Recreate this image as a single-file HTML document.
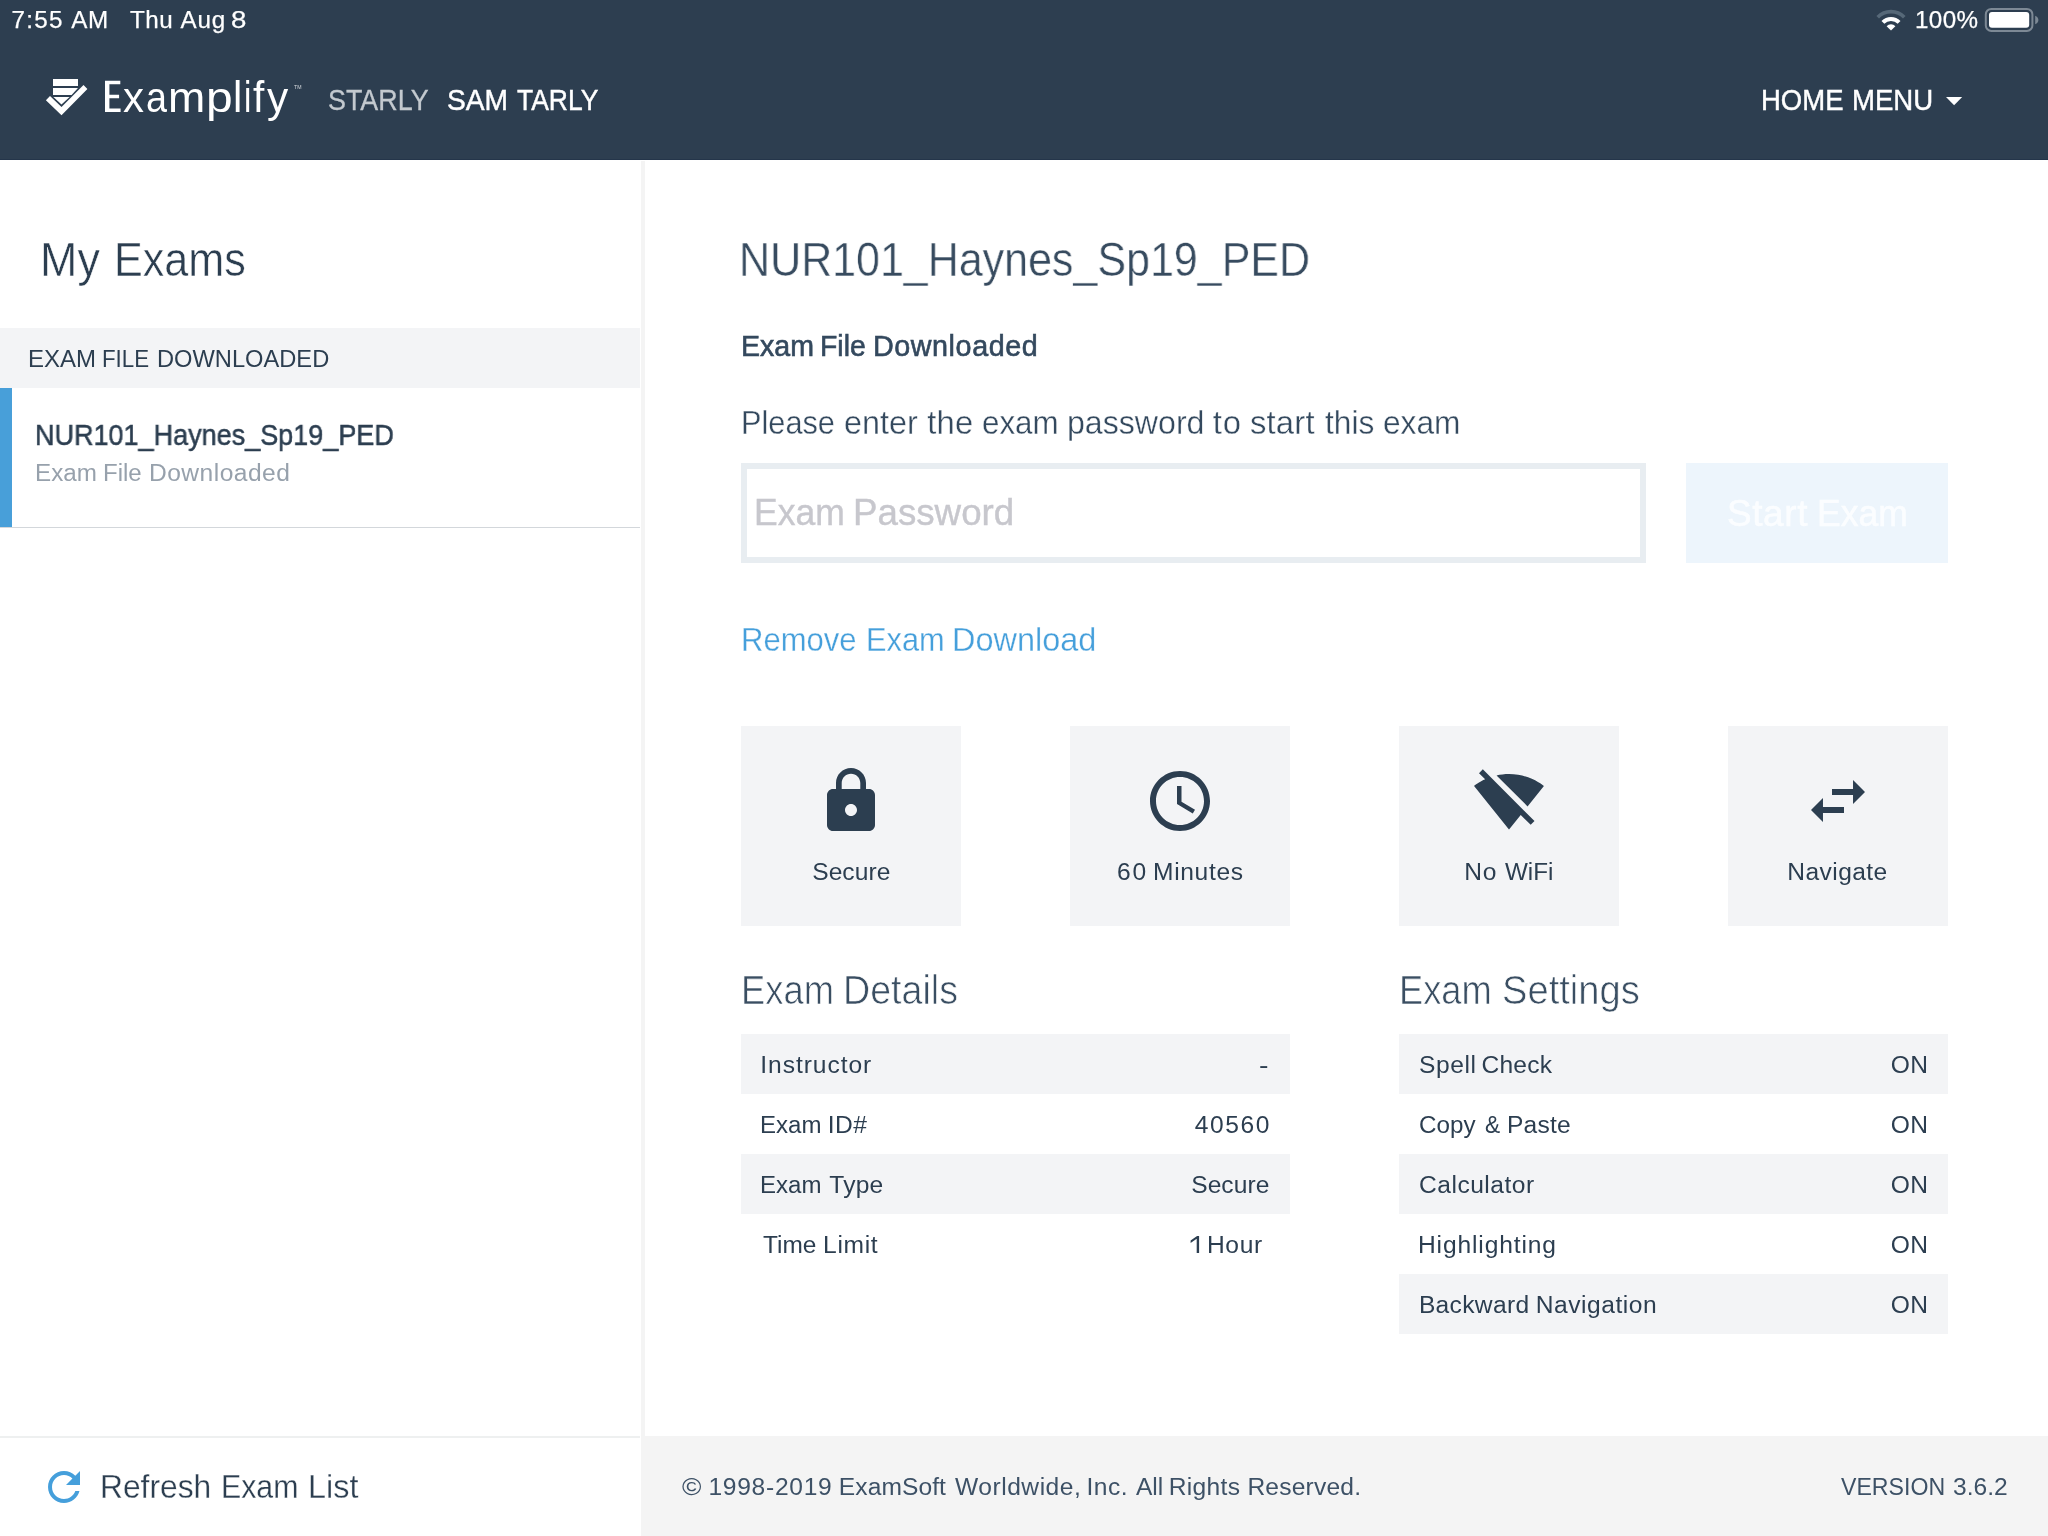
<!DOCTYPE html>
<html><head><meta charset="utf-8"><title>Examplify</title>
<style>
html,body{margin:0;padding:0;}
body{width:2048px;height:1536px;position:relative;overflow:hidden;background:#fff;font-family:"Liberation Sans", sans-serif;}
#app{position:absolute;left:0;top:0;width:2048px;height:1536px;overflow:hidden;will-change:transform;}
.a{position:absolute;display:block;}
.t{position:absolute;white-space:pre;transform-origin:0 0;font-family:"Liberation Sans", sans-serif;}
</style></head>
<body>
<div id="app">
<div class="a" style="left:0px;top:0px;width:2048px;height:160px;background:#2d3e50;"></div>
<div class="a" style="left:0px;top:159px;width:2048px;height:1px;background:#24354a;"></div>
<div class="a" style="left:641px;top:161px;width:4px;height:1275px;background:#f4f4f4;"></div>
<div class="a" style="left:641px;top:1436px;width:1407px;height:100px;background:#f4f4f4;"></div>
<div class="a" style="left:0px;top:1436px;width:640px;height:2px;background:#eef0f0;"></div>
<div class="a" style="left:0px;top:328px;width:640px;height:60px;background:#f3f4f6;"></div>
<div class="a" style="left:0px;top:388px;width:12px;height:139px;background:#489fd9;"></div>
<div class="a" style="left:0px;top:527px;width:640px;height:1px;background:#d3d7db;"></div>
<div class="a" style="left:741px;top:463px;width:905px;height:100px;background:#fff;box-sizing:border-box;border:6px solid #e8edf1;"></div>
<div class="a" style="left:1686px;top:463px;width:262px;height:100px;background:#edf5fc;"></div>
<div class="a" style="left:741px;top:726px;width:220px;height:200px;background:#f3f4f6;"></div>
<div class="a" style="left:1070px;top:726px;width:220px;height:200px;background:#f3f4f6;"></div>
<div class="a" style="left:1399px;top:726px;width:220px;height:200px;background:#f3f4f6;"></div>
<div class="a" style="left:1728px;top:726px;width:220px;height:200px;background:#f3f4f6;"></div>
<div class="a" style="left:741px;top:1034px;width:549px;height:60px;background:#f3f4f6;"></div>
<div class="a" style="left:741px;top:1154px;width:549px;height:60px;background:#f3f4f6;"></div>
<div class="a" style="left:1399px;top:1034px;width:549px;height:60px;background:#f3f4f6;"></div>
<div class="a" style="left:1399px;top:1154px;width:549px;height:60px;background:#f3f4f6;"></div>
<div class="a" style="left:1399px;top:1274px;width:549px;height:60px;background:#f3f4f6;"></div>

<svg class="a" style="left:0;top:0" width="2048" height="160" viewBox="0 0 2048 160">
  <!-- logo -->
  <g fill="#fff">
    <rect x="53" y="79" width="25" height="7"/>
    <polygon points="53,88 78,88 71.6,95 53,95"/>
    <polygon points="53.4,97 69.6,97 61.5,104.6"/>
    <polygon points="50,96 45.9,100.25 61.5,115.3 87.4,89 83.5,84.9 61.5,106.9"/>
  </g>
  <!-- E of logotype -->
  <path fill="#fff" d="M105,80.75 H120.3 V84.2 H109.4 V94.8 H119.1 V98.25 H109.4 V108.6 H120.6 V112 H105 Z"/>
  <!-- caret -->
  <polygon fill="#fff" points="1946,97 1962.2,97 1954.1,105.3"/>
  <!-- wifi -->
  <g fill="none" stroke-linecap="butt">
    <path d="M1877.7,17.2 A18.8,18.8 0 0 1 1904.3,17.2" stroke="#566878" stroke-width="3.7"/>
    <path d="M1882.9,22.4 A11.5,11.5 0 0 1 1899.1,22.4" stroke="#fff" stroke-width="4"/>
  </g>
  <path fill="#fff" d="M1891,30.6 L1886.6,26.2 A6.2,6.2 0 0 1 1895.4,26.2 Z"/>
  <!-- battery -->
  <rect x="1985.8" y="8.9" width="46.6" height="22" rx="5.5" ry="5.5" fill="none" stroke="#7d8995" stroke-width="2"/>
  <rect x="1989" y="12" width="40.2" height="15.8" rx="3" ry="3" fill="#fff"/>
  <path fill="#7d8995" d="M2035.2,15.8 C2037.2,16.6 2038.4,18.2 2038.4,20 C2038.4,21.8 2037.2,23.4 2035.2,24.2 Z"/>
</svg>

<svg class="a" style="left:1188px;top:1232px" width="14" height="24" viewBox="1188 1232 14 24"><path fill="#2c3e50" d="M1199.1,1253 V1236 H1197.1 L1190.6,1240.5 V1243 L1196.7,1238.8 V1253 Z"/></svg>
<svg class="a" style="left:815px;top:765px" width="72" height="72" viewBox="0 0 24 24"><path fill="#2c3e50" d="M18 8h-1V6c0-2.76-2.24-5-5-5S7 3.24 7 6v2H6c-1.1 0-2 .9-2 2v10c0 1.1.9 2 2 2h12c1.1 0 2-.9 2-2V10c0-1.1-.9-2-2-2zm-6 9c-1.1 0-2-.9-2-2s.9-2 2-2 2 .9 2 2-.9 2-2 2zm3.1-9H8.9V6c0-1.71 1.39-3.1 3.1-3.1 1.71 0 3.1 1.39 3.1 3.1v2z"/></svg>
<svg class="a" style="left:1144px;top:765px" width="72" height="72" viewBox="0 0 24 24"><path fill="#2c3e50" d="M11.99 2C6.47 2 2 6.48 2 12s4.47 10 9.99 10C17.52 22 22 17.52 22 12S17.52 2 11.99 2zM12 20c-4.42 0-8-3.58-8-8s3.58-8 8-8 8 3.58 8 8-3.58 8-8 8zm.5-13H11v6l5.25 3.15.75-1.23-4.5-2.67z"/></svg>
<svg class="a" style="left:1473px;top:765px" width="72" height="72" viewBox="0 0 24 24"><path fill="#2c3e50" d="M23.64 7c-.45-.34-4.93-4-11.64-4-1.5 0-2.89.19-4.15.48L18.18 13.8 23.64 7zm-6.6 8.22L3.27 1.44 2 2.72l2.05 2.06C1.91 5.76.59 6.82.36 7l11.63 14.49.01.01.01-.01 3.9-4.86 3.32 3.32 1.27-1.27-3.46-3.46z"/></svg>
<svg class="a" style="left:1802px;top:765px" width="72" height="72" viewBox="0 0 24 24"><path fill="#2c3e50" d="M6.99 11L3 15l3.99 4v-3H14v-2H6.99v-3zM21 9l-3.99-4v3H10v2h7.01v3L21 9z"/></svg>
<svg class="a" style="left:40px;top:1463px" width="48" height="48" viewBox="0 0 24 24"><path fill="#459fdb" d="M17.65 6.35C16.2 4.9 14.21 4 12 4c-4.42 0-7.99 3.58-7.99 8s3.57 8 7.99 8c3.73 0 6.84-2.55 7.73-6h-2.08c-.82 2.33-3.04 4-5.65 4-3.31 0-6-2.69-6-6s2.69-6 6-6c1.66 0 3.14.69 4.22 1.78L13 11h7V4l-2.35 2.35z"/></svg>
<div class="t" style="top:5px;font-size:24.2px;line-height:30px;color:#fff;left:11.50px;letter-spacing:1.259px;-webkit-text-stroke:0.25px #fff;">7:55</div>
<div class="t" style="top:5px;font-size:24.2px;line-height:30px;color:#fff;left:71.30px;letter-spacing:0.467px;-webkit-text-stroke:0.25px #fff;">AM</div>
<div class="t" style="top:5px;font-size:24.2px;line-height:30px;color:#fff;left:130.00px;letter-spacing:0.537px;-webkit-text-stroke:0.25px #fff;">Thu</div>
<div class="t" style="top:5px;font-size:24.2px;line-height:30px;color:#fff;left:180.60px;letter-spacing:0.808px;-webkit-text-stroke:0.25px #fff;">Aug</div>
<div class="t" style="top:5px;font-size:24.2px;line-height:30px;color:#fff;left:231.36px;transform:scaleX(1.1417);-webkit-text-stroke:0.25px #fff;">8</div>
<div class="t" style="top:5px;font-size:24.2px;line-height:30px;color:#fff;left:1915.00px;letter-spacing:0.415px;-webkit-text-stroke:0.25px #fff;">100%</div>
<div class="t" style="top:71px;font-size:42.6px;line-height:52px;color:#fff;left:123.40px;transform:scaleX(0.9857);">x</div>
<div class="t" style="top:71px;font-size:42.6px;line-height:52px;color:#fff;left:145.51px;transform:scaleX(0.8870);">a</div>
<div class="t" style="top:71px;font-size:42.6px;line-height:52px;color:#fff;left:168.30px;transform:scaleX(1.0484);">m</div>
<div class="t" style="top:71px;font-size:42.6px;line-height:52px;color:#fff;left:206.25px;transform:scaleX(1.1250);">p</div>
<div class="t" style="top:71px;font-size:42.6px;line-height:52px;color:#fff;left:266.60px;transform:scaleX(0.9955);">y</div>
<div class="t" style="top:70px;font-size:44.6px;line-height:54px;color:#fff;left:233.19px;transform:scaleX(0.9375);">l</div>
<div class="t" style="top:70px;font-size:44.6px;line-height:54px;color:#fff;left:243.92px;transform:scaleX(0.7400);">i</div>
<div class="t" style="top:70px;font-size:44.6px;line-height:54px;color:#fff;left:252.90px;transform:scaleX(0.9115);">f</div>
<div class="t" style="top:84px;font-size:5.6px;line-height:7px;color:#d5d9dd;left:294.40px;transform:scaleX(0.9267);">TM</div>
<div class="t" style="top:82px;font-size:29.5px;line-height:36px;color:#c3c9cf;left:328.49px;transform:scaleX(0.9115);-webkit-text-stroke:0.3px #c3c9cf;">STARLY</div>
<div class="t" style="top:82px;font-size:29.5px;line-height:36px;color:#fff;left:447.14px;transform:scaleX(0.9551);-webkit-text-stroke:0.45px #fff;">SAM</div>
<div class="t" style="top:82px;font-size:29.5px;line-height:36px;color:#fff;left:517.20px;transform:scaleX(0.8975);-webkit-text-stroke:0.45px #fff;">TARLY</div>
<div class="t" style="top:82px;font-size:29.5px;line-height:36px;color:#fff;left:1760.94px;transform:scaleX(0.9321);-webkit-text-stroke:0.45px #fff;">HOME</div>
<div class="t" style="top:82px;font-size:29.5px;line-height:36px;color:#fff;left:1852.13px;transform:scaleX(0.9347);-webkit-text-stroke:0.45px #fff;">MENU</div>
<div class="t" style="top:230px;font-size:48.4px;line-height:59px;color:#2c3e50;left:40.02px;transform:scaleX(0.9276);-webkit-text-stroke:0.5px #fff;">My</div>
<div class="t" style="top:230px;font-size:48.4px;line-height:59px;color:#2c3e50;left:113.53px;transform:scaleX(0.8915);-webkit-text-stroke:0.5px #fff;">Exams</div>
<div class="t" style="top:344px;font-size:24.59px;line-height:30px;color:#2c3e50;left:27.55px;transform:scaleX(0.9761);">EXAM</div>
<div class="t" style="top:344px;font-size:24.59px;line-height:30px;color:#2c3e50;left:102.09px;transform:scaleX(0.9069);">FILE</div>
<div class="t" style="top:344px;font-size:24.59px;line-height:30px;color:#2c3e50;left:156.67px;transform:scaleX(0.9629);">DOWNLOADED</div>
<div class="t" style="top:418px;font-size:28.69px;line-height:35px;color:#2c3e50;left:35.32px;transform:scaleX(0.9413);-webkit-text-stroke:0.5px #2c3e50;">NUR101_Haynes_Sp19_PED</div>
<div class="t" style="top:458px;font-size:24.59px;line-height:30px;color:#97a1ac;left:35.23px;transform:scaleX(0.9840);">Exam</div>
<div class="t" style="top:458px;font-size:24.59px;line-height:30px;color:#97a1ac;left:103.05px;transform:scaleX(0.9774);">File</div>
<div class="t" style="top:458px;font-size:24.59px;line-height:30px;color:#97a1ac;left:149.00px;letter-spacing:0.469px;">Downloaded</div>
<div class="t" style="top:1467px;font-size:32.79px;line-height:40px;color:#2c3e50;left:100.36px;transform:scaleX(0.9691);-webkit-text-stroke:0.3px #fff;">Refresh</div>
<div class="t" style="top:1467px;font-size:32.79px;line-height:40px;color:#2c3e50;left:220.85px;transform:scaleX(0.9244);-webkit-text-stroke:0.3px #fff;">Exam</div>
<div class="t" style="top:1467px;font-size:32.79px;line-height:40px;color:#2c3e50;left:307.72px;transform:scaleX(0.9876);-webkit-text-stroke:0.3px #fff;">List</div>
<div class="t" style="top:230px;font-size:48.4px;line-height:59px;color:#374b5f;left:739.34px;transform:scaleX(0.8882);-webkit-text-stroke:0.5px #fff;">NUR101_Haynes_Sp19_PED</div>
<div class="t" style="top:329px;font-size:28.69px;line-height:35px;color:#34495e;left:740.71px;transform:scaleX(0.9952);-webkit-text-stroke:0.6px #34495e;">Exam</div>
<div class="t" style="top:329px;font-size:28.69px;line-height:35px;color:#34495e;left:819.82px;transform:scaleX(0.9891);-webkit-text-stroke:0.6px #34495e;">File</div>
<div class="t" style="top:329px;font-size:28.69px;line-height:35px;color:#34495e;left:872.90px;letter-spacing:0.596px;-webkit-text-stroke:0.6px #34495e;">Downloaded</div>
<div class="t" style="top:403px;font-size:32.79px;line-height:40px;color:#34495e;left:741.13px;transform:scaleX(0.9371);-webkit-text-stroke:0.35px #fff;">Please</div>
<div class="t" style="top:403px;font-size:32.79px;line-height:40px;color:#34495e;left:844.11px;transform:scaleX(0.9864);-webkit-text-stroke:0.35px #fff;">enter</div>
<div class="t" style="top:403px;font-size:32.79px;line-height:40px;color:#34495e;left:927.30px;letter-spacing:0.130px;-webkit-text-stroke:0.35px #fff;">the</div>
<div class="t" style="top:403px;font-size:32.79px;line-height:40px;color:#34495e;left:981.64px;transform:scaleX(0.9556);-webkit-text-stroke:0.35px #fff;">exam</div>
<div class="t" style="top:403px;font-size:32.79px;line-height:40px;color:#34495e;left:1066.54px;transform:scaleX(0.9798);-webkit-text-stroke:0.35px #fff;">password</div>
<div class="t" style="top:403px;font-size:32.79px;line-height:40px;color:#34495e;left:1212.80px;letter-spacing:0.892px;-webkit-text-stroke:0.35px #fff;">to</div>
<div class="t" style="top:403px;font-size:32.79px;line-height:40px;color:#34495e;left:1250.00px;letter-spacing:0.188px;-webkit-text-stroke:0.35px #fff;">start</div>
<div class="t" style="top:403px;font-size:32.79px;line-height:40px;color:#34495e;left:1324.50px;transform:scaleX(0.9660);-webkit-text-stroke:0.35px #fff;">this</div>
<div class="t" style="top:403px;font-size:32.79px;line-height:40px;color:#34495e;left:1383.03px;transform:scaleX(0.9659);-webkit-text-stroke:0.35px #fff;">exam</div>
<div class="t" style="top:490px;font-size:36.89px;line-height:45px;color:#c7c7cd;left:754.41px;transform:scaleX(0.9627);-webkit-text-stroke:0.4px #c7c7cd;">Exam</div>
<div class="t" style="top:490px;font-size:36.89px;line-height:45px;color:#c7c7cd;left:853.31px;transform:scaleX(0.9956);-webkit-text-stroke:0.4px #c7c7cd;">Password</div>
<div class="t" style="top:491px;font-size:36.89px;line-height:45px;color:#fbfdff;left:1726.90px;letter-spacing:0.668px;-webkit-text-stroke:0.5px #fbfdff;">Start</div>
<div class="t" style="top:491px;font-size:36.89px;line-height:45px;color:#fbfdff;left:1816.91px;transform:scaleX(0.9627);-webkit-text-stroke:0.5px #fbfdff;">Exam</div>
<div class="t" style="top:620px;font-size:32.79px;line-height:40px;color:#459fdb;left:741.11px;transform:scaleX(0.9467);-webkit-text-stroke:0.3px #fff;">Remove</div>
<div class="t" style="top:620px;font-size:32.79px;line-height:40px;color:#459fdb;left:865.62px;transform:scaleX(0.9380);-webkit-text-stroke:0.3px #fff;">Exam</div>
<div class="t" style="top:620px;font-size:32.79px;line-height:40px;color:#459fdb;left:952.32px;transform:scaleX(0.9905);-webkit-text-stroke:0.3px #fff;">Download</div>
<div class="t" style="top:857px;font-size:24.59px;line-height:30px;color:#2c3e50;left:812.20px;letter-spacing:0.059px;">Secure</div>
<div class="t" style="top:857px;font-size:24.59px;line-height:30px;color:#2c3e50;left:1117.00px;letter-spacing:1.931px;">60</div>
<div class="t" style="top:857px;font-size:24.59px;line-height:30px;color:#2c3e50;left:1153.00px;letter-spacing:0.672px;">Minutes</div>
<div class="t" style="top:857px;font-size:24.59px;line-height:30px;color:#2c3e50;left:1464.20px;letter-spacing:0.750px;">No</div>
<div class="t" style="top:857px;font-size:24.59px;line-height:30px;color:#2c3e50;left:1505.00px;transform:scaleX(0.9859);">WiFi</div>
<div class="t" style="top:857px;font-size:24.59px;line-height:30px;color:#2c3e50;left:1787.30px;letter-spacing:0.424px;">Navigate</div>
<div class="t" style="top:965px;font-size:40.99px;line-height:50px;color:#3a4e62;left:740.54px;transform:scaleX(0.8874);-webkit-text-stroke:0.7px #fff;">Exam</div>
<div class="t" style="top:965px;font-size:40.99px;line-height:50px;color:#3a4e62;left:842.65px;transform:scaleX(0.9180);-webkit-text-stroke:0.7px #fff;">Details</div>
<div class="t" style="top:965px;font-size:40.99px;line-height:50px;color:#3a4e62;left:1398.64px;transform:scaleX(0.8853);-webkit-text-stroke:0.7px #fff;">Exam</div>
<div class="t" style="top:965px;font-size:40.99px;line-height:50px;color:#3a4e62;left:1501.67px;transform:scaleX(0.9304);-webkit-text-stroke:0.7px #fff;">Settings</div>
<div class="t" style="top:1050px;font-size:24.59px;line-height:30px;color:#2c3e50;left:760.30px;letter-spacing:0.949px;">Instructor</div>
<div class="t" style="top:1050px;font-size:24.59px;line-height:30px;color:#2c3e50;left:1258.54px;transform:scaleX(1.1571);">-</div>
<div class="t" style="top:1110px;font-size:24.59px;line-height:30px;color:#2c3e50;left:760.45px;transform:scaleX(0.9772);">Exam</div>
<div class="t" style="top:1110px;font-size:24.59px;line-height:30px;color:#2c3e50;left:827.80px;letter-spacing:0.461px;">ID#</div>
<div class="t" style="top:1110px;font-size:24.59px;line-height:30px;color:#2c3e50;left:1194.80px;letter-spacing:1.556px;">40560</div>
<div class="t" style="top:1170px;font-size:24.59px;line-height:30px;color:#2c3e50;left:760.45px;transform:scaleX(0.9772);">Exam</div>
<div class="t" style="top:1170px;font-size:24.59px;line-height:30px;color:#2c3e50;left:829.30px;letter-spacing:0.195px;">Type</div>
<div class="t" style="top:1170px;font-size:24.59px;line-height:30px;color:#2c3e50;left:1191.20px;letter-spacing:0.059px;">Secure</div>
<div class="t" style="top:1230px;font-size:24.59px;line-height:30px;color:#2c3e50;left:762.60px;transform:scaleX(0.9937);">Time</div>
<div class="t" style="top:1230px;font-size:24.59px;line-height:30px;color:#2c3e50;left:823.10px;letter-spacing:0.659px;">Limit</div>
<div class="t" style="top:1230px;font-size:24.59px;line-height:30px;color:#2c3e50;left:1206.90px;letter-spacing:0.671px;">Hour</div>
<div class="t" style="top:1050px;font-size:24.59px;line-height:30px;color:#2c3e50;left:1419.00px;letter-spacing:0.602px;">Spell</div>
<div class="t" style="top:1050px;font-size:24.59px;line-height:30px;color:#2c3e50;left:1481.40px;letter-spacing:0.256px;">Check</div>
<div class="t" style="top:1110px;font-size:24.59px;line-height:30px;color:#2c3e50;left:1419.02px;transform:scaleX(0.9844);">Copy</div>
<div class="t" style="top:1110px;font-size:24.59px;line-height:30px;color:#2c3e50;left:1484.60px;transform:scaleX(0.9235);">&amp;</div>
<div class="t" style="top:1110px;font-size:24.59px;line-height:30px;color:#2c3e50;left:1507.00px;letter-spacing:0.205px;">Paste</div>
<div class="t" style="top:1170px;font-size:24.59px;line-height:30px;color:#2c3e50;left:1419.00px;letter-spacing:0.504px;">Calculator</div>
<div class="t" style="top:1230px;font-size:24.59px;line-height:30px;color:#2c3e50;left:1418.00px;letter-spacing:0.867px;">Highlighting</div>
<div class="t" style="top:1290px;font-size:24.59px;line-height:30px;color:#2c3e50;left:1418.90px;letter-spacing:0.322px;">Backward</div>
<div class="t" style="top:1290px;font-size:24.59px;line-height:30px;color:#2c3e50;left:1535.80px;letter-spacing:0.515px;">Navigation</div>
<div class="t" style="top:1050px;font-size:24.59px;line-height:30px;color:#2c3e50;left:1890.80px;letter-spacing:0.282px;">ON</div>
<div class="t" style="top:1110px;font-size:24.59px;line-height:30px;color:#2c3e50;left:1890.80px;letter-spacing:0.282px;">ON</div>
<div class="t" style="top:1170px;font-size:24.59px;line-height:30px;color:#2c3e50;left:1890.80px;letter-spacing:0.282px;">ON</div>
<div class="t" style="top:1230px;font-size:24.59px;line-height:30px;color:#2c3e50;left:1890.80px;letter-spacing:0.282px;">ON</div>
<div class="t" style="top:1290px;font-size:24.59px;line-height:30px;color:#2c3e50;left:1890.80px;letter-spacing:0.282px;">ON</div>
<div class="t" style="top:1472px;font-size:24.59px;line-height:30px;color:#3d5166;left:681.80px;transform:scaleX(1.0722);">©</div>
<div class="t" style="top:1472px;font-size:24.59px;line-height:30px;color:#3d5166;left:708.50px;letter-spacing:0.704px;">1998-2019</div>
<div class="t" style="top:1472px;font-size:24.59px;line-height:30px;color:#3d5166;left:838.80px;letter-spacing:0.083px;">ExamSoft</div>
<div class="t" style="top:1472px;font-size:24.59px;line-height:30px;color:#3d5166;left:955.00px;letter-spacing:0.524px;">Worldwide,</div>
<div class="t" style="top:1472px;font-size:24.59px;line-height:30px;color:#3d5166;left:1086.50px;letter-spacing:0.504px;">Inc.</div>
<div class="t" style="top:1472px;font-size:24.59px;line-height:30px;color:#3d5166;left:1135.50px;transform:scaleX(0.9979);">All</div>
<div class="t" style="top:1472px;font-size:24.59px;line-height:30px;color:#3d5166;left:1168.70px;letter-spacing:0.325px;">Rights</div>
<div class="t" style="top:1472px;font-size:24.59px;line-height:30px;color:#3d5166;left:1247.40px;letter-spacing:0.201px;">Reserved.</div>
<div class="t" style="top:1472px;font-size:24.59px;line-height:30px;color:#3d5166;left:1841.40px;transform:scaleX(0.9414);">VERSION</div>
<div class="t" style="top:1472px;font-size:24.59px;line-height:30px;color:#3d5166;left:1953.00px;letter-spacing:0.001px;">3.6.2</div>
<div class="t" style="left:105px;top:78px;font-size:30px;line-height:36px;color:transparent">E</div>
<div class="t" style="left:1190px;top:1231px;font-size:24px;line-height:28px;color:transparent">1</div>
</div>
</body></html>
